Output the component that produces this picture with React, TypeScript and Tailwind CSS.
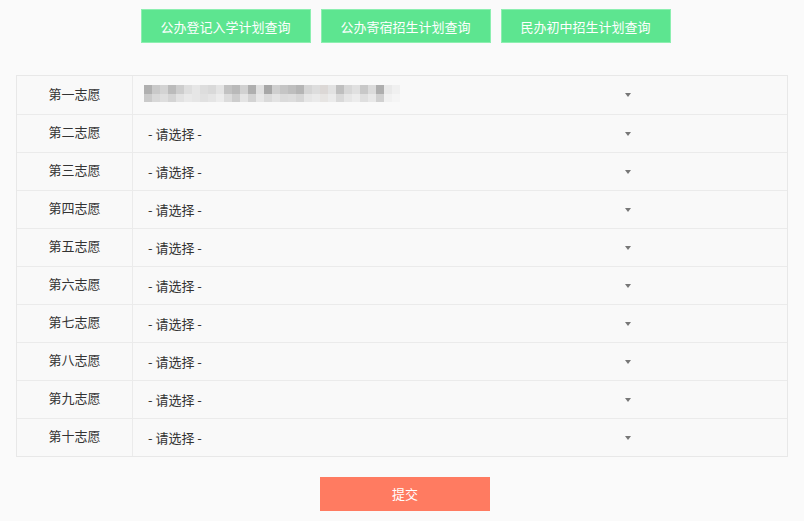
import React from 'react'

const LINKS = ['公办登记入学计划查询', '公办寄宿招生计划查询', '民办初中招生计划查询']
const WISHES = ['第一志愿', '第二志愿', '第三志愿', '第四志愿', '第五志愿', '第六志愿', '第七志愿', '第八志愿', '第九志愿', '第十志愿']

const TOP = [
  'bg-[#a9a9a9]', 'bg-[#c4c4c4]', 'bg-[#cfcfcf]', 'bg-[#b5b5b5]', 'bg-[#c9c9c9]', 'bg-[#dcdcdc]', 'bg-[#e4e4e4]', 'bg-[#dadada]',
  'bg-[#d6d6d6]', 'bg-[#e2e2e2]', 'bg-[#bdbdbd]', 'bg-[#b3b3b3]', 'bg-[#cdcdcd]', 'bg-[#a7a7a7]', 'bg-[#dedede]', 'bg-[#9f9f9f]',
  'bg-[#cbcbcb]', 'bg-[#c0c0c0]', 'bg-[#b8b8b8]', 'bg-[#aeaeae]', 'bg-[#d2d2d2]', 'bg-[#dadada]', 'bg-[#d9d5d3]', 'bg-[#e0e0e0]',
  'bg-[#b9b9b9]', 'bg-[#d4d4d4]', 'bg-[#dedede]', 'bg-[#c3c3c3]', 'bg-[#d8d8d8]', 'bg-[#a6a6a6]', 'bg-[#e8e8e8]', 'bg-[#f0f0f0]',
]
const BOTTOM = [
  'bg-[#c6c6c6]', 'bg-[#d5d5d5]', 'bg-[#dcdcdc]', 'bg-[#d0d0d0]', 'bg-[#e0e0e0]', 'bg-[#e8e8e8]', 'bg-[#e5e5e5]', 'bg-[#dfdfdf]',
  'bg-[#e3e3e3]', 'bg-[#ebebeb]', 'bg-[#d9d9d9]', 'bg-[#c9c9c9]', 'bg-[#e2e2e2]', 'bg-[#cfcfcf]', 'bg-[#e6e6e6]', 'bg-[#d7d7d7]',
  'bg-[#e1e1e1]', 'bg-[#d8d8d8]', 'bg-[#dbdbdb]', 'bg-[#d3d3d3]', 'bg-[#e4e4e4]', 'bg-[#e9e9e9]', 'bg-[#e6e3e1]', 'bg-[#eaeaea]',
  'bg-[#d6d6d6]', 'bg-[#e5e5e5]', 'bg-[#ebebeb]', 'bg-[#dddddd]', 'bg-[#e7e7e7]', 'bg-[#cccccc]', 'bg-[#f1f1f1]', 'bg-[#f5f5f5]',
]

function Caret() {
  return <span className="w-0 h-0 border-l-[3px] border-r-[3px] border-t-[4px] border-l-transparent border-r-transparent border-t-[#777]" />
}

// blurred (privacy-masked) value of the first wish
function Mosaic() {
  return (
    <div className="flex flex-col blur-[0.6px] opacity-90">
      <div className="flex">
        {TOP.map((c, i) => <span key={i} className={`w-[8px] h-[9px] ${c}`} />)}
      </div>
      <div className="flex">
        {BOTTOM.map((c, i) => <span key={i} className={`w-[8px] h-[8px] ${c}`} />)}
      </div>
    </div>
  )
}

export default function App() {
  return (
    <div className="min-h-[521px] bg-[#fafafa] font-['Noto_Sans_CJK_SC','Noto_Sans',sans-serif] text-[#333] pt-[9px]">
      {/* Plan query links */}
      <div className="flex justify-center gap-[10px] pl-[7px]">
        {LINKS.map((l) => (
          <button
            key={l}
            className="w-[170px] h-[34px] bg-[#5de590] border border-[#8cefb0] text-white text-[13px] leading-none"
          >
            {l}
          </button>
        ))}
      </div>

      {/* Wish table */}
      <div className="mx-[16px] mt-[32px] border border-[#e8e8e8] bg-[#f9f9f9]">
        {WISHES.map((w, i) => (
          <div key={w} className={`flex h-[38px] ${i > 0 ? 'border-t border-[#ebebeb]' : ''}`}>
            <div className="w-[116px] shrink-0 border-r border-[#ebebeb] flex items-center justify-center text-[13px] pb-[3px]">
              {w}
            </div>
            <div className="flex items-center pl-[11px]">
              <div className="w-[490px] flex items-center justify-between pl-[4px] pr-[3px]">
                {i === 0 ? (
                  <div className="-ml-[4px] pb-[3px]"><Mosaic /></div>
                ) : (
                  <span className="text-[13px] pt-[1px]">- 请选择 -</span>
                )}
                <Caret />
              </div>
            </div>
          </div>
        ))}
      </div>

      {/* Submit */}
      <div className="flex justify-center mt-[20px] pl-[6px]">
        <button className="w-[170px] h-[34px] bg-[#ff7b61] text-white text-[13px]">提交</button>
      </div>
    </div>
  )
}
